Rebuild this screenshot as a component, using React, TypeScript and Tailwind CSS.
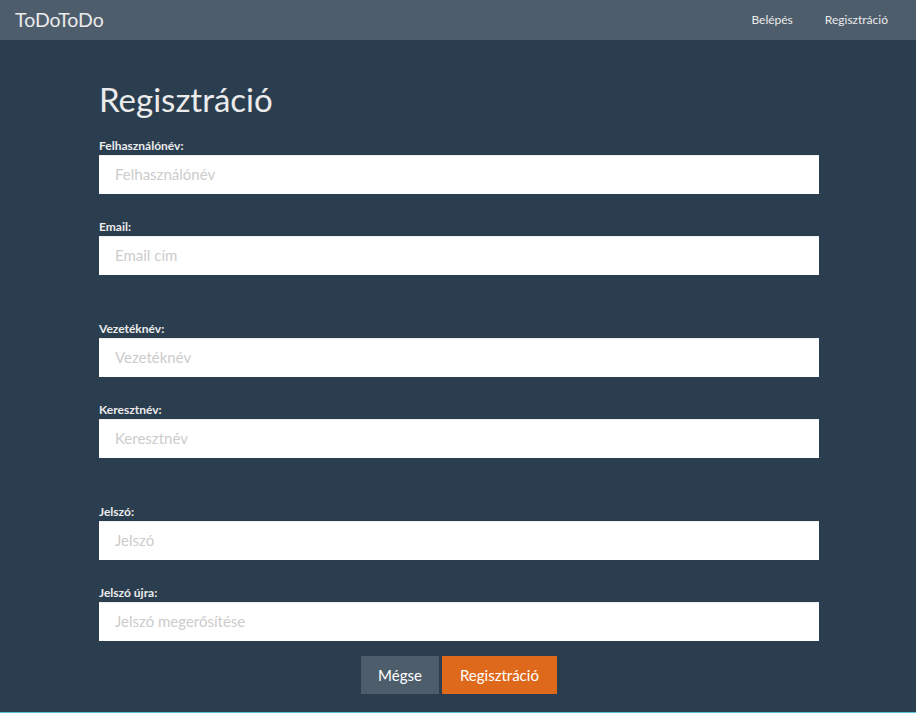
import { useState } from 'react'

const fields = [
  { id: 'username', label: 'Felhasználónév:', placeholder: 'Felhasználónév', type: 'text', section: false },
  { id: 'email', label: 'Email:', placeholder: 'Email cím', type: 'email', section: false },
  { id: 'lastname', label: 'Vezetéknév:', placeholder: 'Vezetéknév', type: 'text', section: true },
  { id: 'firstname', label: 'Keresztnév:', placeholder: 'Keresztnév', type: 'text', section: false },
  { id: 'password', label: 'Jelszó:', placeholder: 'Jelszó', type: 'password', section: true },
  { id: 'password2', label: 'Jelszó újra:', placeholder: 'Jelszó megerősítése', type: 'password', section: false },
]

export default function App() {
  const [values, setValues] = useState<Record<string, string>>({})

  return (
    <div className="min-h-screen flex flex-col bg-[#2b3e50] text-[#ebebeb] font-['Lato','Noto_Sans',sans-serif]">
      <nav className="h-[40px] bg-[#4e5d6c] flex items-center justify-between pl-[15px] pr-[28px] shrink-0">
        <a href="#" className="text-[19.5px] leading-none text-[#ebebeb]">ToDoToDo</a>
        <div className="flex gap-[32px] text-[12px] text-[#ebebeb]">
          <a href="#">Belépés</a>
          <a href="#">Regisztráció</a>
        </div>
      </nav>

      <main className="ml-[99px] w-[720px]">
        <h1 className="mt-[41px] text-[33px] leading-[1.1] font-normal">Regisztráció</h1>
        <form className="mt-[21px]" onSubmit={e => e.preventDefault()}>
          {fields.map((f, i) => (
            <div key={f.id} className={(f.section ? 'mt-[46px]' : i === 0 ? '' : 'mt-[25px]')}>
              <label htmlFor={f.id} className="block text-[12px] leading-[16px] font-bold mb-px">{f.label}</label>
              <input
                id={f.id}
                type={f.type}
                placeholder={f.placeholder}
                value={values[f.id] ?? ''}
                onChange={e => setValues({ ...values, [f.id]: e.target.value })}
                className="block w-full h-[39px] px-[16px] pb-[2px] bg-white text-[15px] text-[#2b3e50] placeholder:text-[#cccccc] outline-none shadow-[inset_0_1px_1px_rgba(0,0,0,0.075)]"
              />
            </div>
          ))}
          <div className="mt-[15px] flex justify-center gap-[3px]">
            <button type="button" className="h-[38px] px-[17px] bg-[#4e5d6c] text-white text-[15px]">Mégse</button>
            <button type="submit" className="h-[38px] px-[18px] bg-[#df691a] text-white text-[15px]">Regisztráció</button>
          </div>
        </form>
      </main>

      <div className="mt-auto h-px bg-[#5bc0de]" />
    </div>
  )
}
